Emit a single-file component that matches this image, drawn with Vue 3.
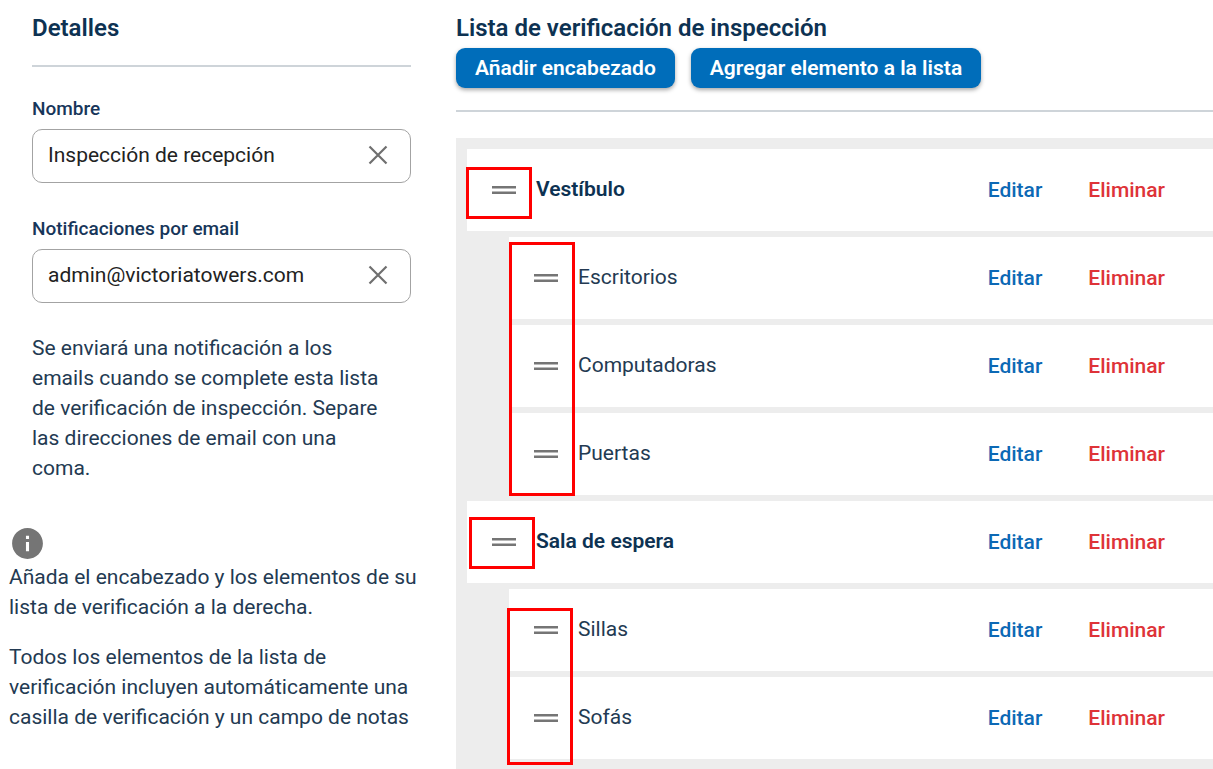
<script setup>
import { ref } from 'vue'

const fields = ref([
  { id: 'nombre', label: 'Nombre', value: 'Inspección de recepción' },
  { id: 'emails', label: 'Notificaciones por email', value: 'admin@victoriatowers.com' },
])

const groups = [
  {
    title: 'Vestíbulo',
    items: ['Escritorios', 'Computadoras', 'Puertas'],
    headMark: { left: -1, top: 18, height: 52 },
    itemsMark: { left: 0, top: 5, height: 254 },
  },
  {
    title: 'Sala de espera',
    items: ['Sillas', 'Sofás'],
    headMark: { left: 2, top: 16, height: 52 },
    itemsMark: { left: -2, top: 19, height: 157 },
  },
]

const px = (mark) => ({
  left: mark.left + 'px',
  top: mark.top + 'px',
  height: mark.height + 'px',
})
</script>

<template>
  <div class="page">
    <aside class="side">
      <section class="details">
        <h2 class="title">Detalles</h2>
        <hr class="rule" />
        <div v-for="f in fields" :key="f.id" class="field">
          <label class="label" :for="f.id">{{ f.label }}</label>
          <div class="box">
            <input :id="f.id" v-model="f.value" class="input" type="text" />
            <button class="clear" type="button" aria-label="Borrar" @click="f.value = ''">
              <svg width="20" height="20" viewBox="0 0 20 20">
                <path d="M1.5 1.5 18.5 18.5M18.5 1.5 1.5 18.5" fill="none" stroke="#6f6f6f" stroke-width="2.2" />
              </svg>
            </button>
          </div>
        </div>
        <p class="text">
          Se enviará una notificación a los emails cuando se complete esta lista de verificación de
          inspección. Separe las direcciones de email con una coma.
        </p>
      </section>

      <section class="help">
        <svg class="info" width="37" height="37" viewBox="0 0 24 24">
          <path
            d="M12 2C6.48 2 2 6.48 2 12s4.48 10 10 10 10-4.480 10-10S17.520 2 12 2zm1 15h-2v-6h2v6zm0-8h-2V7h2v2z"
            fill="#757575"
          />
        </svg>
        <p class="text">Añada el encabezado y los elementos de su lista de verificación a la derecha.</p>
        <p class="text">
          Todos los elementos de la lista de verificación incluyen automáticamente una casilla de
          verificación y un campo de notas
        </p>
      </section>
    </aside>

    <main class="main">
      <h2 class="title">Lista de verificación de inspección</h2>
      <div class="actions">
        <button class="primary" type="button">Añadir encabezado</button>
        <button class="primary" type="button">Agregar elemento a la lista</button>
      </div>
      <hr class="rule" />

      <div class="list">
        <section v-for="g in groups" :key="g.title" class="group">
          <div class="row head">
            <svg class="grip" width="24" height="8" viewBox="0 0 24 8">
              <path d="M0 0H24V2.600H0zM0 5.400H24V8H0z" fill="#757575" />
            </svg>
            <h3 class="name">{{ g.title }}</h3>
            <button class="link edit" type="button">Editar</button>
            <button class="link remove" type="button">Eliminar</button>
            <span class="mark" :style="px(g.headMark)"></span>
          </div>
          <div class="items">
            <div v-for="item in g.items" :key="item" class="row">
              <svg class="grip" width="24" height="8" viewBox="0 0 24 8">
                <path d="M0 0H24V2.600H0zM0 5.400H24V8H0z" fill="#757575" />
              </svg>
              <span class="name">{{ item }}</span>
              <button class="link edit" type="button">Editar</button>
              <button class="link remove" type="button">Eliminar</button>
            </div>
            <span class="mark" :style="px(g.itemsMark)"></span>
          </div>
        </section>
      </div>
    </main>
  </div>
</template>

<style>
body {
  background: #fff;
}
</style>

<style scoped>
.page {
  display: grid;
  grid-template-columns: 456px minmax(0, 1fr);
  font-family: Roboto, "Liberation Sans", sans-serif;
  font-size: 21px;
  color: #233a52;
}

button,
input {
  font: inherit;
  border: 0;
  padding: 0;
  background: none;
}

button {
  cursor: pointer;
}

.title {
  margin: 0;
  padding-top: 12px;
  font-size: 24px;
  font-weight: 600;
  line-height: 32px;
  color: #0d3252;
}

.rule {
  margin: 0;
  border: 0;
  height: 2px;
  background: #ced4d9;
}

.details {
  padding: 0 45px 0 32px;
}

.details .rule {
  margin: 21px 0 30px;
}

.field + .field {
  margin-top: 34px;
}

.label {
  display: block;
  margin-bottom: 8px;
  font-size: 19px;
  font-weight: 500;
  line-height: 24px;
  color: #17365a;
}

.box {
  display: flex;
  align-items: center;
  box-sizing: border-box;
  height: 54px;
  padding: 0 22px 2px 15px;
  border: 1px solid #a3a3a3;
  border-radius: 10px;
}

.input {
  flex: 1;
  min-width: 0;
  color: #222;
  outline: none;
}

.clear {
  display: flex;
}

.text {
  margin: 0;
  line-height: 30px;
}

.details .text {
  margin-top: 30px;
  padding-right: 24px;
}

.help {
  padding: 42px 20px 0 9px;
}

.info {
  display: block;
}

.help .text + .text {
  margin-top: 20px;
}

.actions {
  display: flex;
  gap: 16px;
  margin: 4px 0 22px;
}

.primary {
  height: 40px;
  padding: 0 19px;
  border-radius: 9px;
  background: #006dba;
  color: #fff;
  font-weight: 600;
  box-shadow: 0 2px 4px rgba(0, 0, 0, 0.35);
}

.list {
  margin-top: 26px;
  padding: 11px 0 10px 11px;
  background: #ededed;
}

.group,
.items {
  display: flex;
  flex-direction: column;
  gap: 6px;
}

.group + .group {
  margin-top: 6px;
}

.items {
  position: relative;
  margin-left: 42px;
}

.row {
  position: relative;
  display: flex;
  align-items: center;
  height: 82px;
  padding: 0 48px 0 25px;
  box-sizing: border-box;
  background: #fff;
}

.name {
  flex: 1;
  margin: 0 0 0 20px;
  padding-bottom: 2px;
  font-size: 21px;
  font-weight: 400;
}

.head .name {
  font-weight: 600;
  color: #0d3252;
}

.link {
  font-weight: 500;
}

.edit {
  color: #0c69b5;
  margin-right: 46px;
}

.remove {
  color: #de3338;
}

.mark {
  position: absolute;
  width: 66px;
  box-sizing: border-box;
  border: 3px solid #f00;
  pointer-events: none;
}
</style>
